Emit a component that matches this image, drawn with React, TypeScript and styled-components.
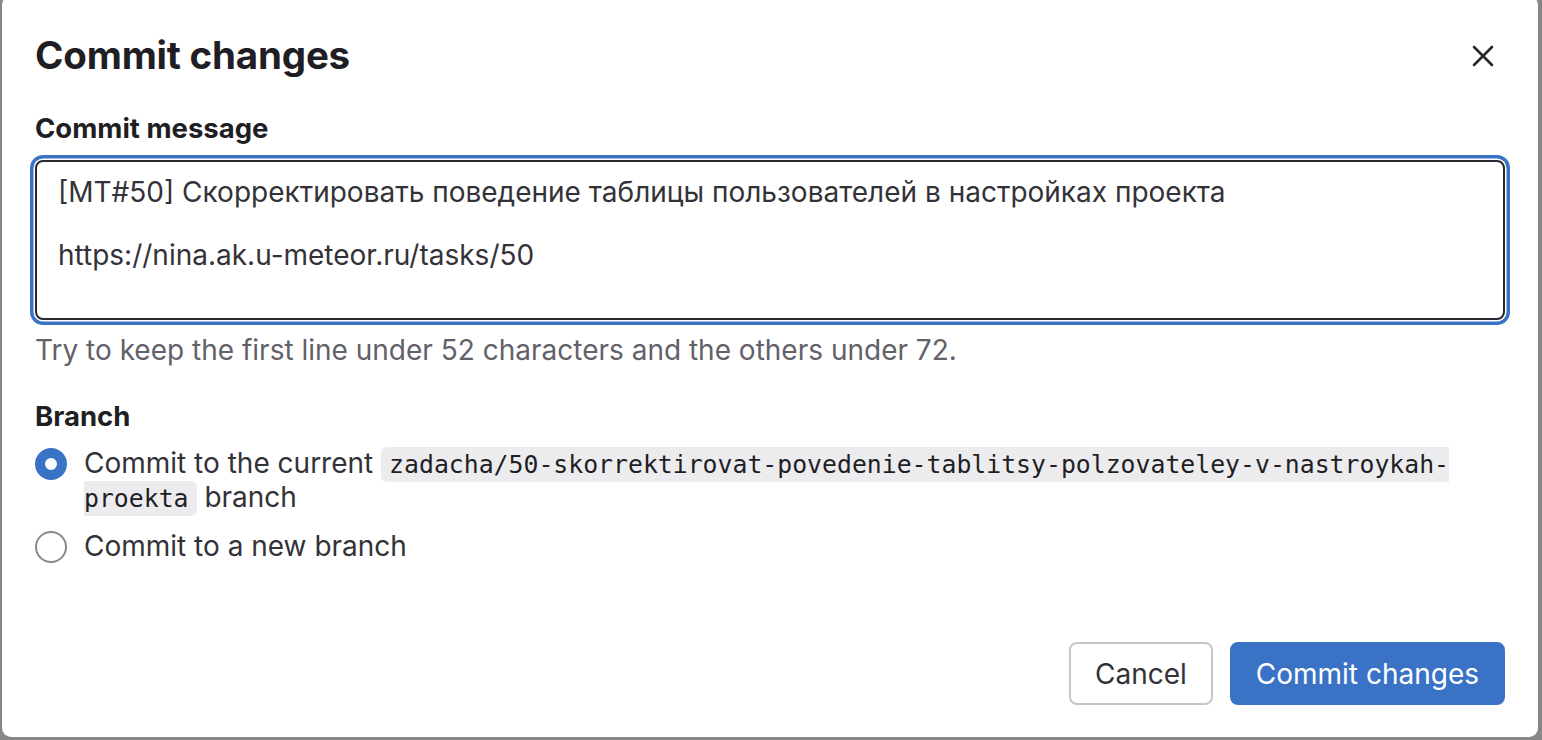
import React from 'react'
import styled, { createGlobalStyle } from 'styled-components'

const GlobalStyle = createGlobalStyle`
  html, body {
    margin: 0;
    padding: 0;
    height: 100%;
    overflow: hidden;
  }
  body {
    font-family: Inter, "Noto Sans", "Liberation Sans", sans-serif;
    color: #333238;
  }
`

const Backdrop = styled.div`
  width: 1542px;
  height: 740px;
  background: #878787;
  overflow: hidden;
`

const Modal = styled.div`
  box-sizing: border-box;
  width: 1536px;
  height: 741px;
  margin: -4px 0 0 2px;
  background: #fff;
  border-radius: 9px;
  display: flex;
  flex-direction: column;
  padding: 0 33px 32px;
`

const Header = styled.header`
  display: flex;
  align-items: center;
  justify-content: space-between;
  padding-top: 37px;
`

const Title = styled.h2`
  margin: 0;
  font-size: 38.5px;
  line-height: 45px;
  font-weight: 700;
  color: #1f1e24;
  letter-spacing: -0.2px;
`

const CloseButton = styled.button`
  border: 0;
  background: transparent;
  padding: 0;
  width: 32px;
  height: 32px;
  margin-right: 6px;
  display: flex;
  align-items: center;
  justify-content: center;
  color: #28272d;
  cursor: pointer;
`

const Label = styled.div<{ $top: number }>`
  margin-top: ${p => p.$top}px;
  font-size: 27.5px;
  line-height: 32px;
  font-weight: 700;
  color: #1f1e24;
`

const MessageBox = styled.textarea`
  display: block;
  box-sizing: border-box;
  width: 100%;
  height: 160px;
  margin-top: 16px;
  padding: 15px 21px;
  border: 2px solid #28272d;
  border-radius: 8px;
  box-shadow: 0 0 0 1.5px #fff, 0 0 0 5px #3a73c6;
  outline: none;
  resize: none;
  font-family: inherit;
  font-size: 28px;
  line-height: 31.5px;
  color: #333238;
`

const Help = styled.p`
  margin: 14px 0 0;
  font-size: 28px;
  line-height: 32px;
  color: #626168;
`

const RadioList = styled.div`
  margin-top: 15px;
  display: flex;
  flex-direction: column;
  gap: 15px;
`

const RadioRow = styled.label`
  display: flex;
  align-items: flex-start;
  gap: 17px;
  font-size: 28px;
  line-height: 33px;
  color: #333238;
`

const RadioDot = styled.span<{ $checked?: boolean }>`
  flex: none;
  box-sizing: border-box;
  width: 32px;
  height: 32px;
  margin-top: 0.5px;
  border-radius: 50%;
  border: ${p => (p.$checked ? '10.5px solid #3a73c6' : '2px solid #89888d')};
  background: #fff;
`

const Code = styled.code`
  font-family: "DejaVu Sans Mono", "Liberation Mono", monospace;
  font-size: 24.8px;
  background: #ececef;
  border-radius: 6px;
  padding: 3px 8px;
  color: #1f1e24;
`

const Footer = styled.footer`
  margin-top: auto;
  display: flex;
  justify-content: flex-end;
  gap: 17px;
`

const Button = styled.button<{ $primary?: boolean }>`
  box-sizing: border-box;
  height: 63px;
  padding: 0 24px;
  border-radius: 8px;
  font-family: inherit;
  font-size: 28px;
  cursor: pointer;
  border: ${p => (p.$primary ? '2px solid #3a73c6' : '2px solid #c6c5ca')};
  background: ${p => (p.$primary ? '#3a73c6' : '#fff')};
  color: ${p => (p.$primary ? '#fff' : '#333238')};
`

export default function App() {
  return (
    <>
      <GlobalStyle />
      <Backdrop>
        <Modal>
          <Header>
            <Title>Commit changes</Title>
            <CloseButton aria-label="Close">
              <svg width="22" height="22" viewBox="0 0 22 22" fill="none" stroke="currentColor" strokeWidth="2.6" strokeLinecap="round">
                <path d="M2 2l18 18M20 2L2 20" />
              </svg>
            </CloseButton>
          </Header>

          <Label $top={34}>Commit message</Label>
          <MessageBox
            defaultValue={'[MT#50] Скорректировать поведение таблицы пользователей в настройках проекта\n\nhttps://nina.ak.u-meteor.ru/tasks/50'}
          />
          <Help>Try to keep the first line under 52 characters and the others under 72.</Help>

          <Label $top={34}>Branch</Label>
          <RadioList>
            <RadioRow>
              <RadioDot $checked />
              <span>
                Commit to the current <Code>zadacha/50-skorrektirovat-povedenie-tablitsy-polzovateley-v-nastroykah-proekta</Code> branch
              </span>
            </RadioRow>
            <RadioRow>
              <RadioDot />
              <span>Commit to a new branch</span>
            </RadioRow>
          </RadioList>

          <Footer>
            <Button>Cancel</Button>
            <Button $primary>Commit changes</Button>
          </Footer>
        </Modal>
      </Backdrop>
    </>
  )
}
